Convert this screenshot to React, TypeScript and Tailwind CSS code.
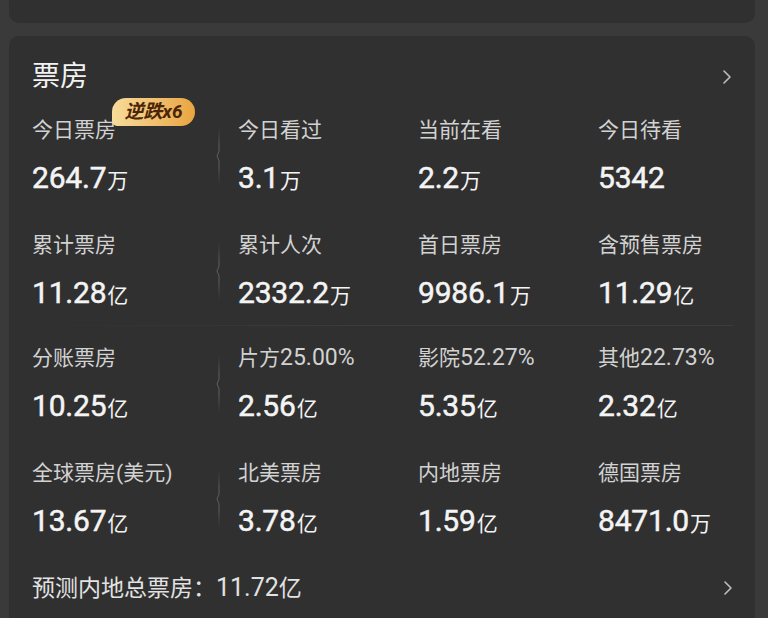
const font = { fontFamily: "Roboto, 'Noto Sans CJK SC', sans-serif" };

type Stat = { label: string; num?: string; value: string; unit?: string; badge?: string };

const rows: Stat[][] = [
  [
    { label: "今日票房", value: "264.7", unit: "万", badge: "逆跌x6" },
    { label: "今日看过", value: "3.1", unit: "万" },
    { label: "当前在看", value: "2.2", unit: "万" },
    { label: "今日待看", value: "5342" },
  ],
  [
    { label: "累计票房", value: "11.28", unit: "亿" },
    { label: "累计人次", value: "2332.2", unit: "万" },
    { label: "首日票房", value: "9986.1", unit: "万" },
    { label: "含预售票房", value: "11.29", unit: "亿" },
  ],
  [
    { label: "分账票房", value: "10.25", unit: "亿" },
    { label: "片方", num: "25.00%", value: "2.56", unit: "亿" },
    { label: "影院", num: "52.27%", value: "5.35", unit: "亿" },
    { label: "其他", num: "22.73%", value: "2.32", unit: "亿" },
  ],
  [
    { label: "全球票房(美元)", value: "13.67", unit: "亿" },
    { label: "北美票房", value: "3.78", unit: "亿" },
    { label: "内地票房", value: "1.59", unit: "亿" },
    { label: "德国票房", value: "8471.0", unit: "万" },
  ],
];

function Chevron({ className }: { className?: string }) {
  return (
    <svg className={className} viewBox="0 0 10 16" fill="none">
      <path d="M2 2l6 6-6 6" stroke="#bdbdbd" strokeWidth="1.6" strokeLinecap="round" strokeLinejoin="round" />
    </svg>
  );
}

function Divider() {
  return (
    <svg className="mt-[12px] h-[58px] w-[6px]" viewBox="0 0 6 60" preserveAspectRatio="none" fill="none">
      <defs>
        <linearGradient id="fade" x1="0" y1="0" x2="0" y2="1">
          <stop offset="0" stopColor="#555" stopOpacity="0" />
          <stop offset="0.3" stopColor="#5e5e5e" />
          <stop offset="0.7" stopColor="#5e5e5e" />
          <stop offset="1" stopColor="#555" stopOpacity="0" />
        </linearGradient>
      </defs>
      <path d="M4 0V25L2 30L4 35V60" stroke="url(#fade)" strokeWidth="1" />
    </svg>
  );
}

function Cell({ s }: { s: Stat }) {
  return (
    <div className="flex flex-col">
      <div className="relative h-[30px] leading-[30px] text-[21px] text-[#d2d2d2] whitespace-nowrap">
        {s.label}
        {s.num && <span className="text-[23px]">{s.num}</span>}
        {s.badge && (
          <span className="absolute left-[80px] top-[-17px] flex h-[28px] w-[83px] items-center justify-center rounded-[14px] rounded-bl-[5px] bg-gradient-to-r from-[#f7dc9a] to-[#e9a53f] text-[19px] font-bold italic text-[#4a2508]">
            {s.badge}
          </span>
        )}
      </div>
      <div className="mt-[15px] h-[36px] leading-[36px] whitespace-nowrap text-[#f4f4f4]">
        <span className="text-[30px] tracking-[-0.2px] [-webkit-text-stroke:0.5px_#f4f4f4]">{s.value}</span>
        {s.unit && <span className="ml-[1px] text-[21px]">{s.unit}</span>}
      </div>
    </div>
  );
}

function Row({ items, className }: { items: Stat[]; className?: string }) {
  return (
    <div className={"grid grid-cols-[206px_180px_180px_1fr] " + (className ?? "")}>
      <div className="flex items-start">
        <div className="flex-1">
          <Cell s={items[0]} />
        </div>
        <Divider />
        <div className="w-[17px]" />
      </div>
      <Cell s={items[1]} />
      <Cell s={items[2]} />
      <Cell s={items[3]} />
    </div>
  );
}

export default function App() {
  return (
    <div className="h-[618px] w-[768px] overflow-hidden bg-[#3a3a3a] pl-[9px] pr-[13px]" style={font}>
      <div className="h-[23px] rounded-b-[10px] bg-[#303030]" />
      <div className="mt-[13px] h-[620px] rounded-[10px] bg-[#303030] pl-[23px] pr-[22px] pt-[23px]">
        <div className="flex h-[36px] items-center justify-between">
          <span className="text-[28px] leading-[36px] text-[#f2f2f2]">票房</span>
          <Chevron className="mr-[1px] h-[16px] w-[10px]" />
        </div>
        <Row items={rows[0]} className="mt-[20px]" />
        <Row items={rows[1]} className="mt-[34px]" />
        <div className="mt-[14px] h-px bg-gradient-to-r from-[#303030] via-[#3c3c3c] to-[#3c3c3c]" />
        <Row items={rows[2]} className="mt-[17px]" />
        <Row items={rows[3]} className="mt-[34px]" />
        <div className="mt-[34px] flex h-[30px] items-center justify-between">
          <span className="text-[23px] leading-[30px] text-[#e2e2e2] whitespace-nowrap">
            预测内地总票房：<span className="text-[25px]">11.72</span>亿
          </span>
          <Chevron className="h-[18px] w-[10px]" />
        </div>
      </div>
    </div>
  );
}
